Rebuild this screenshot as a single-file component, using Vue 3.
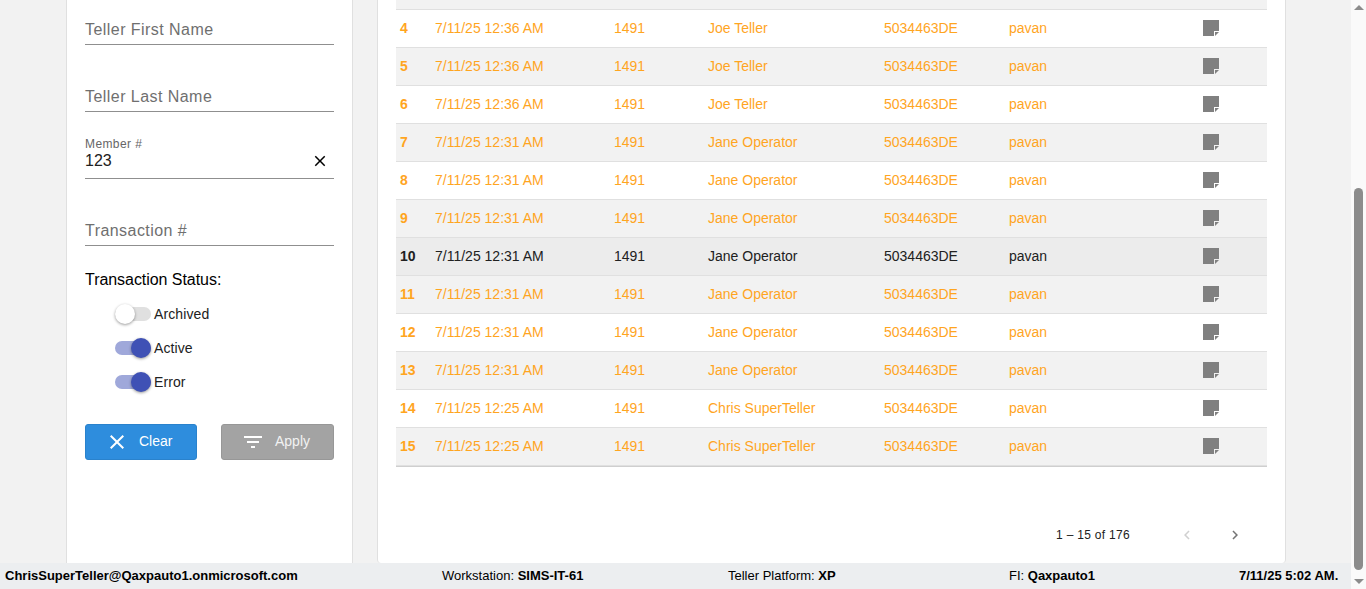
<template>
  <div class="page">
    <div class="viewport">
      <div class="content">
        <aside class="filters">
          <div class="field" v-for="f in fields" :key="f.label" :class="{ filled: f.value }">
            <template v-if="f.value">
              <span class="float-label">{{ f.label }}</span>
              <div class="value-row">
                <span>{{ f.value }}</span>
                <svg class="clear-x" viewBox="0 0 24 24" width="18" height="18">
                  <path d="M19 6.41 17.59 5 12 10.59 6.41 5 5 6.41 10.59 12 5 17.59 6.41 19 12 13.41 17.59 19 19 17.59 13.41 12z" />
                </svg>
              </div>
            </template>
            <span v-else class="placeholder">{{ f.label }}</span>
          </div>

          <div class="status-title">Transaction Status:</div>
          <div class="toggle" v-for="t in toggles" :key="t.label">
            <span class="track" :class="{ on: t.on }"><span class="thumb"></span></span>
            <span class="toggle-label">{{ t.label }}</span>
          </div>

          <div class="buttons">
            <button class="btn clear">
              <svg viewBox="0 0 24 24" width="24" height="24">
                <path d="M19 6.41 17.59 5 12 10.59 6.41 5 5 6.41 10.59 12 5 17.59 6.41 19 12 13.41 17.59 19 19 17.59 13.41 12z" />
              </svg>
              <span>Clear</span>
            </button>
            <button class="btn apply">
              <svg viewBox="0 0 24 24" width="24" height="24">
                <path d="M10 18h4v-2h-4v2zM3 6v2h18V6H3zm3 7h12v-2H6v2z" />
              </svg>
              <span>Apply</span>
            </button>
          </div>
        </aside>

        <main class="results">
          <div class="table">
            <div class="sliver"></div>
            <div
              v-for="r in rows"
              :key="r.id"
              class="row"
              :class="{ shaded: r.shaded, hover: r.id === 10 }"
            >
              <span class="num">{{ r.id }}</span>
              <span>{{ r.date }}</span>
              <span>1491</span>
              <span>{{ r.teller }}</span>
              <span>5034463DE</span>
              <span>pavan</span>
              <svg class="note" viewBox="0 0 16 16" width="16" height="16">
                <path d="M0 0h16v11h-5v5H0z" />
                <path d="M12 12h4l-4 4z" />
              </svg>
            </div>
          </div>
          <div class="pager">
            <span class="range">1 – 15 of 176</span>
            <svg class="chev off" viewBox="0 0 24 24" width="24" height="24">
              <path d="M15.41 7.41 14 6l-6 6 6 6 1.41-1.41L10.83 12z" />
            </svg>
            <svg class="chev" viewBox="0 0 24 24" width="24" height="24">
              <path d="M10 6 8.59 7.41 13.17 12l-4.58 4.59L10 18l6-6z" />
            </svg>
          </div>
        </main>
      </div>

      <footer class="status-bar">
        <b>ChrisSuperTeller@Qaxpauto1.onmicrosoft.com</b>
        <span>Workstation: <b>SIMS-IT-61</b></span>
        <span>Teller Platform: <b>XP</b></span>
        <span>FI: <b>Qaxpauto1</b></span>
        <b class="clock">7/11/25 5:02 AM.</b>
      </footer>
    </div>

    <div class="scrollbar">
      <span class="arrow up"></span>
      <div class="rail"><div class="bar"></div></div>
      <span class="arrow down"></span>
    </div>
  </div>
</template>

<script setup>
const fields = [
  { label: 'Teller First Name' },
  { label: 'Teller Last Name' },
  { label: 'Member #', value: '123' },
  { label: 'Transaction #' }
]

const toggles = [
  { label: 'Archived', on: false },
  { label: 'Active', on: true },
  { label: 'Error', on: true }
]

const tellerFor = (id) => {
  if (id < 7) return 'Joe Teller'
  if (id < 14) return 'Jane Operator'
  return 'Chris SuperTeller'
}

const dateFor = (id) => {
  if (id < 7) return '7/11/25 12:36 AM'
  if (id < 14) return '7/11/25 12:31 AM'
  return '7/11/25 12:25 AM'
}

const shadedIds = [5, 7, 9, 10, 11, 13, 15]

const rows = Array.from({ length: 12 }, (_, i) => {
  const id = i + 4
  return { id, date: dateFor(id), teller: tellerFor(id), shaded: shadedIds.includes(id) }
})
</script>

<style>
html, body {
  margin: 0;
  overflow: hidden;
}
</style>

<style scoped>
.page {
  display: flex;
  width: 1366px;
  height: 589px;
  overflow: hidden;
  background: #f2f2f2;
  font-family: "Liberation Sans", Arial, sans-serif;
  color: #212121;
}

.viewport {
  flex: 1;
  min-width: 0;
  display: flex;
  flex-direction: column;
}

.content {
  flex: 1;
  min-height: 0;
  display: flex;
  gap: 24px;
  padding-left: 66px;
}

.filters {
  width: 287px;
  box-sizing: border-box;
  background: #fff;
  border-left: 1px solid #e0e0e0;
  border-right: 1px solid #e0e0e0;
  padding: 0 18px;
}

.field {
  height: 45px;
  margin-bottom: 22px;
  box-sizing: border-box;
  border-bottom: 1px solid #8f8f8f;
  display: flex;
  flex-direction: column;
  justify-content: flex-end;
}

.placeholder {
  font-size: 16px;
  letter-spacing: 0.45px;
  line-height: 20px;
  padding-bottom: 4px;
  color: #6f6f6f;
}

.float-label {
  font-size: 12px;
  line-height: 14px;
  letter-spacing: 0.4px;
  color: #666;
}

.value-row {
  display: flex;
  justify-content: space-between;
  align-items: center;
  font-size: 16px;
  line-height: 20px;
  padding-bottom: 7px;
  color: #212121;
}

.clear-x {
  margin-right: 5px;
  fill: #000;
}

.status-title {
  margin-top: 24px;
  font-size: 16px;
  letter-spacing: -0.05px;
  line-height: 20px;
  color: #000;
}

.toggle {
  height: 34px;
  display: flex;
  align-items: center;
  padding-left: 30px;
}

.status-title + .toggle {
  margin-top: 7px;
}

.track {
  position: relative;
  width: 36px;
  height: 14px;
  border-radius: 7px;
  background: #e0e0e0;
}

.track.on {
  background: #9fa8da;
}

.thumb {
  position: absolute;
  top: -3px;
  left: 0;
  width: 20px;
  height: 20px;
  border-radius: 50%;
  background: #fff;
  box-shadow: 0 1px 3px rgba(0, 0, 0, 0.4);
}

.track.on .thumb {
  left: 16px;
  background: #3f51b5;
}

.toggle-label {
  margin-left: 3px;
  font-size: 14px;
  letter-spacing: 0.1px;
}

.buttons {
  display: flex;
  justify-content: space-between;
  margin-top: 25px;
}

.btn {
  height: 36px;
  display: flex;
  align-items: center;
  padding: 0 0 0 19px;
  border-radius: 3px;
  border: 1px solid transparent;
  font-family: inherit;
  font-size: 14px;
  color: #fff;
}

.btn span {
  padding-bottom: 2px;
}

.btn svg {
  fill: #fff;
}

.clear {
  width: 112px;
  background: #2e8ddd;
  border-color: #2a82cc;
}

.clear span {
  margin-left: 10px;
}

.apply {
  width: 113px;
  background: #a3a3a3;
  border-color: #979797;
  color: #f2f2f2;
}

.apply span {
  margin-left: 10px;
}

.results {
  width: 909px;
  box-sizing: border-box;
  background: #fff;
  border-left: 1px solid #e0e0e0;
  border-right: 1px solid #e0e0e0;
  border-bottom-left-radius: 4px;
  border-bottom-right-radius: 4px;
  padding: 0 18px;
}

.table {
  border-bottom: 1px solid #cfcfcf;
}

.sliver {
  height: 9px;
  background: #f2f2f2;
  border-bottom: 1px solid #e0e0e0;
}

.row {
  height: 38px;
  box-sizing: border-box;
  display: grid;
  grid-template-columns: 35px 179px 94px 176px 125px 194px 16px;
  align-items: center;
  padding: 0 0 2px 4px;
  border-bottom: 1px solid #e0e0e0;
  font-size: 14px;
  color: #ffa51f;
  background: #fff;
}

.row.shaded {
  background: #f2f2f2;
}

.row.hover {
  background: #ececec;
  color: #212121;
}

.num {
  font-weight: 700;
}

.note {
  fill: #808080;
}

.pager {
  display: flex;
  align-items: center;
  justify-content: flex-end;
  margin-top: 56px;
  padding-right: 20px;
  height: 24px;
}

.range {
  font-size: 12px;
  letter-spacing: 0.3px;
  margin-right: 45px;
}

.chev {
  fill: #757575;
  transform: scale(0.75);
}

.chev.off {
  fill: #d0d0d0;
  margin-right: 24px;
}

.status-bar {
  height: 26px;
  flex: none;
  box-sizing: border-box;
  display: grid;
  grid-template-columns: 437px 286px 281px 230px auto;
  align-items: center;
  padding: 0 0 2px 5px;
  background: #eceef0;
  font-size: 13px;
  color: #000;
  white-space: nowrap;
  overflow: hidden;
}

.scrollbar {
  width: 15px;
  flex: none;
  background: #fafafa;
  display: flex;
  flex-direction: column;
  align-items: center;
}

.rail {
  flex: 1;
  width: 100%;
  padding-top: 173px;
  padding-bottom: 4px;
  box-sizing: border-box;
  display: flex;
  justify-content: center;
}

.bar {
  width: 9px;
  height: 100%;
  border-radius: 5px;
  background: #8c8c8c;
}

.arrow {
  width: 0;
  height: 0;
  border-left: 5px solid transparent;
  border-right: 5px solid transparent;
  margin: 5px 0;
}

.arrow.up {
  border-bottom: 5px solid #8c8c8c;
}

.arrow.down {
  border-top: 5px solid #8c8c8c;
}
</style>
